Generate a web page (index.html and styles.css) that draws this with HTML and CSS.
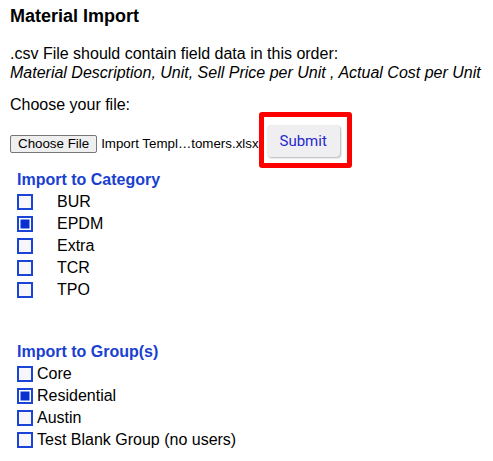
FILE: index.html
```html
<!DOCTYPE html>
<html>
<head>
<meta charset="utf-8">
<link rel="stylesheet" href="styles.css">
</head>
<body>
<div class="page">
  <h1 class="title">Material Import</h1>
  <p class="info">.csv File should contain field data in this order:<br><em>Material Description, Unit, Sell Price per Unit , Actual Cost per Unit</em></p>
  <p class="choose">Choose your file:</p>
  <div class="file-row">
    <span class="file-btn">Choose File</span>
    <span class="file-name">Import Templ…tomers.xlsx</span>
    <span class="highlight"><span class="submit">Submit</span></span>
  </div>
  <div class="section">
    <div class="sec-title">Import to Category</div>
    <div class="cat-row"><span class="cb"></span><span class="cat-label">BUR</span></div>
    <div class="cat-row"><span class="cb checked"></span><span class="cat-label">EPDM</span></div>
    <div class="cat-row"><span class="cb"></span><span class="cat-label">Extra</span></div>
    <div class="cat-row"><span class="cb"></span><span class="cat-label">TCR</span></div>
    <div class="cat-row"><span class="cb"></span><span class="cat-label">TPO</span></div>
  </div>
  <div class="section groups">
    <div class="sec-title">Import to Group(s)</div>
    <div class="grp-row"><span class="cb"></span><span class="grp-label">Core</span></div>
    <div class="grp-row"><span class="cb checked"></span><span class="grp-label">Residential</span></div>
    <div class="grp-row"><span class="cb"></span><span class="grp-label">Austin</span></div>
    <div class="grp-row"><span class="cb"></span><span class="grp-label">Test Blank Group (no users)</span></div>
  </div>
</div>
</body>
</html>
```
FILE: styles.css
```css
html, body {
  margin: 0;
  padding: 0;
  background: #fff;
}
body {
  font-family: "Liberation Sans", Arial, sans-serif;
  color: #000;
}
.page {
  padding: 6px 10px 0 10px;
}
.title {
  font-size: 18px;
  font-weight: bold;
  margin: 0;
  line-height: 21px;
}
.info {
  font-size: 16px;
  line-height: 19px;
  margin: 17px 0 0 0;
}
.info em {
  font-style: italic;
}
.choose {
  font-size: 16px;
  line-height: 19px;
  margin: 13px 0 0 0;
}
.file-row {
  display: flex;
  align-items: flex-start;
  margin-top: -2px;
  height: 56px;
}
.file-btn {
  font-family: "Liberation Sans", Arial, sans-serif;
  font-size: 13.33px;
  background: #efefef;
  border: 1px solid #767676;
  border-radius: 2px;
  padding: 1px 7px;
  line-height: 14px;
  color: #000;
  margin-top: 23px;
}
.file-name {
  font-size: 13.33px;
  line-height: 16px;
  margin-left: 4px;
  margin-top: 24px;
}
.highlight {
  margin-left: 0;
  border: 5px solid #ff0000;
  border-radius: 3px;
  padding: 8px 7px 6px 3px;
  display: flex;
  width: 93px;
  height: 56px;
  box-sizing: border-box;
}
.submit {
  font-family: Roboto, "Liberation Sans", sans-serif;
  font-size: 15px;
  color: #2828cc;
  background: #efeff2;
  border-radius: 4px;
  box-shadow: 1px 1px 2px rgba(0,0,0,0.3);
  width: 73px;
  height: 32px;
  display: flex;
  align-items: center;
  justify-content: center;
}
.section {
  padding-left: 7px;
}
.sec-title {
  font-size: 16px;
  font-weight: bold;
  color: #1a3fd0;
  line-height: 19px;
  margin-top: 2px;
  margin-bottom: 2px;
}
.cat-row, .grp-row {
  display: flex;
  align-items: center;
  height: 22px;
  font-size: 16px;
}
.cb {
  width: 16px;
  height: 16px;
  box-sizing: border-box;
  border: 2px solid #1a44d8;
  background: #f7f7fb;
  flex: none;
}
.cb.checked {
  background: #0a2fd0;
  box-shadow: inset 0 0 0 1.5px #fff;
}
.cat-label {
  margin-left: 24px;
}
.grp-label {
  margin-left: 4px;
}
.groups {
  margin-top: 41px;
}
```
